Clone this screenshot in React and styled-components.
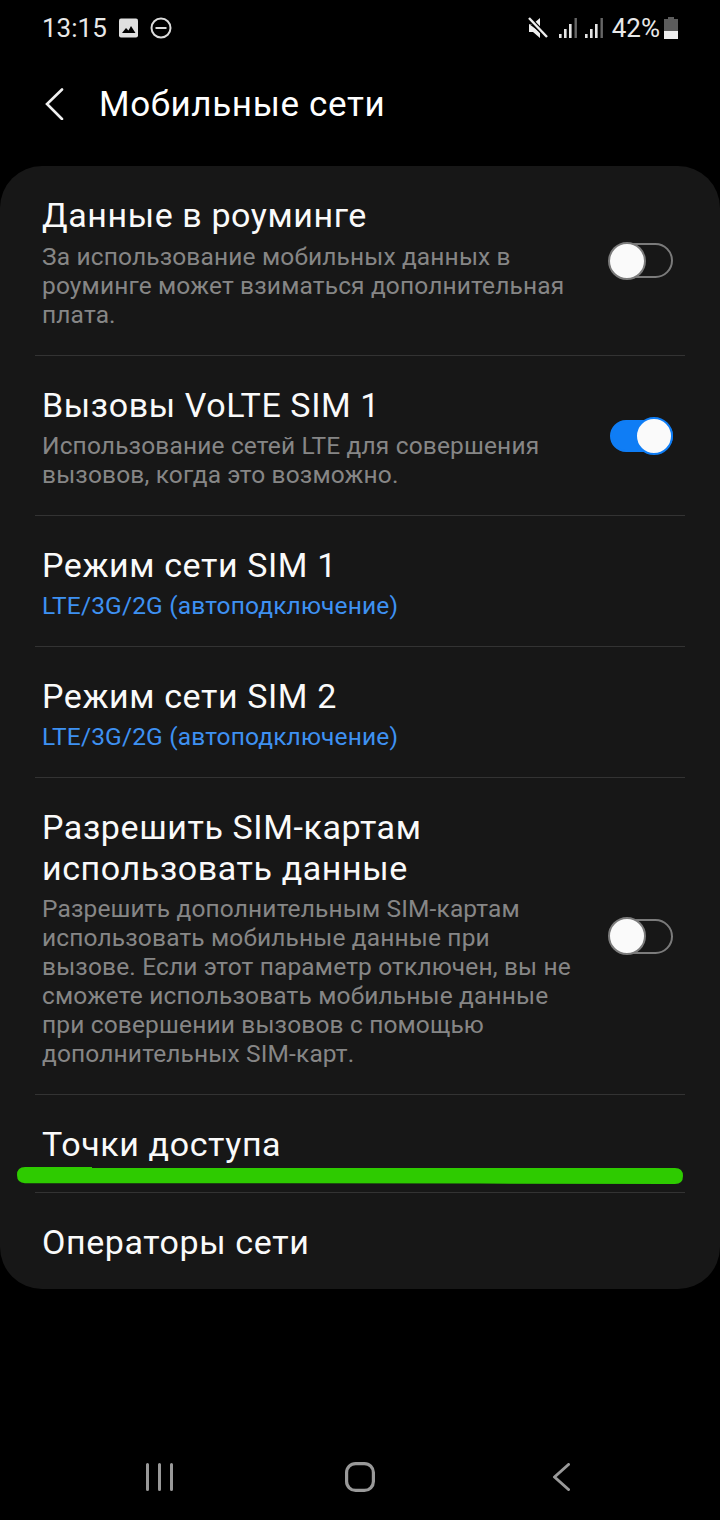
import React from 'react';
import styled, { createGlobalStyle } from 'styled-components';

const Global = createGlobalStyle`
  html, body { margin: 0; padding: 0; background: #000; }
  body { font-family: Roboto, "Noto Sans", sans-serif; }
`;

const Screen = styled.div`
  width: 720px;
  height: 1520px;
  background: #000;
  display: flex;
  flex-direction: column;
  overflow: hidden;
`;

const StatusBar = styled.div`
  height: 56px;
  padding: 0 42px 0 42px;
  display: flex;
  align-items: center;
  justify-content: space-between;
  color: #e8e8e8;
  font-size: 26px;
`;

const StatusGroup = styled.div`
  display: flex;
  align-items: center;
  gap: ${(p) => p.$gap || 0}px;
`;

const Muted = styled.svg`
  margin-right: 11px;
`;

const Signal = styled.svg`
  margin-right: ${(p) => p.$after}px;
`;

const Battery = styled.svg`
  margin-left: 4px;
`;

const Header = styled.div`
  height: 110px;
  padding: 0 0 14px 45px;
  box-sizing: border-box;
  display: flex;
  align-items: center;
  gap: 35px;
  color: #fff;
  font-size: 35px;
  letter-spacing: 0.64px;
`;

const Card = styled.div`
  position: relative;
  background: #171717;
  border-radius: 42px;
  padding: 0 35px;
  height: 1123px;
  box-sizing: border-box;
`;

const Row = styled.div`
  box-sizing: border-box;
  height: ${(p) => p.$h}px;
  padding: 0 12px 0 7px;
  display: flex;
  align-items: center;
  justify-content: space-between;
  border-bottom: ${(p) => (p.$last ? 'none' : '1px solid #333')};
`;

const RowText = styled.div`
  width: 535px;
  align-self: flex-start;
  padding-top: 29px;
`;

const Title = styled.div`
  color: #fafafa;
  font-size: 34px;
  letter-spacing: 0.6px;
  line-height: 41px;
`;

const Desc = styled.div`
  color: #868686;
  font-size: 24.5px;
  letter-spacing: 0.15px;
  line-height: 29px;
  margin-top: ${(p) => p.$gap ?? 5}px;
`;

const Value = styled(Desc)`
  color: #3e91f2;
`;

const Track = styled.div`
  flex: none;
  position: relative;
  width: 63px;
  height: ${(p) => (p.$on ? 32 : 35)}px;
  box-sizing: border-box;
  border-radius: 18px;
  background: ${(p) => (p.$on ? '#0f7df5' : 'transparent')};
  border: 2px solid ${(p) => (p.$on ? '#0f7df5' : '#7b7b7b')};
`;

const Knob = styled.div`
  position: absolute;
  top: 50%;
  transform: translateY(-50%);
  ${(p) => (p.$on ? 'right: -2px;' : 'left: -4px;')}
  width: 38px;
  height: 38px;
  box-sizing: border-box;
  border-radius: 50%;
  background: #fafafa;
  border: 2px solid ${(p) => (p.$on ? '#0f7df5' : '#7b7b7b')};
`;

const Underline = styled.svg`
  position: absolute;
  left: 17px;
  top: 1000px;
`;

const NavBar = styled.div`
  margin-top: auto;
  height: 86px;
  box-sizing: border-box;
  padding: 0 150px 0 146px;
  display: flex;
  align-items: center;
  justify-content: space-between;
`;

const Toggle = ({ on }) => (
  <Track $on={on}>
    <Knob $on={on} />
  </Track>
);

const SignalBars = ({ after }) => (
  <Signal $after={after} width="18" height="21" viewBox="0 0 18 21" fill="#e4e4e4">
    <rect x="0" y="16" width="2.6" height="4" />
    <rect x="5" y="11" width="2.6" height="9" />
    <rect x="10" y="6" width="2.6" height="14" />
    <rect x="15.5" y="0" width="2.4" height="20" fill="#666" />
  </Signal>
);

export default function App() {
  return (
    <Screen>
      <Global />
      <StatusBar>
        <StatusGroup $gap={12}>
          <span>13:15</span>
          <svg width="19" height="20" viewBox="0 0 19 20">
            <rect x="0" y="0.5" width="19" height="19" rx="2" fill="#e0e0e0" />
            <path d="M3 15l4-5 2.5 2.5L12 8l4.5 7z" fill="#000" />
          </svg>
          <svg width="22" height="22" viewBox="0 0 22 22" fill="none" stroke="#dcdcdc" strokeWidth="2">
            <circle cx="11" cy="11" r="9.5" />
            <path d="M5.5 11h11" />
          </svg>
        </StatusGroup>
        <StatusGroup>
          <Muted width="20" height="22" viewBox="0 0 20 22">
            <path d="M1 7h4l7-6v9zM1 7v8h4l7 6v-6z" fill="#eee" />
            <path d="M1 1.5L19 20" stroke="#000" strokeWidth="5" />
            <path d="M1 1L19 20" stroke="#eee" strokeWidth="2.4" />
          </Muted>
          <SignalBars after={8} />
          <SignalBars after={9} />
          <span>42%</span>
          <Battery width="14" height="22" viewBox="0 0 14 22">
            <path d="M4 0h6v2h4v20H0V2h4z" fill="#5c5c5c" />
            <rect x="0" y="14" width="14" height="8" fill="#eee" />
          </Battery>
        </StatusGroup>
      </StatusBar>

      <Header>
        <svg width="19" height="32" viewBox="0 0 19 32" fill="none" stroke="#f0f0f0" strokeWidth="2.6" strokeLinecap="round">
          <path d="M17 1.5L2 16l15 15" />
        </svg>
        <span>Мобильные сети</span>
      </Header>

      <Card>
        <Row $h={190}>
          <RowText>
            <Title>Данные в роуминге</Title>
            <Desc $gap={6}>
              За использование мобильных данных в роуминге может взиматься дополнительная плата.
            </Desc>
          </RowText>
          <Toggle />
        </Row>
        <Row $h={160}>
          <RowText>
            <Title>Вызовы VoLTE SIM 1</Title>
            <Desc>Использование сетей LTE для совершения вызовов, когда это возможно.</Desc>
          </RowText>
          <Toggle on />
        </Row>
        <Row $h={131}>
          <RowText>
            <Title>Режим сети SIM 1</Title>
            <Value>LTE/3G/2G (автоподключение)</Value>
          </RowText>
        </Row>
        <Row $h={131}>
          <RowText>
            <Title>Режим сети SIM 2</Title>
            <Value>LTE/3G/2G (автоподключение)</Value>
          </RowText>
        </Row>
        <Row $h={317}>
          <RowText>
            <Title>Разрешить SIM-картам использовать данные</Title>
            <Desc>
              Разрешить дополнительным SIM-картам использовать мобильные данные при вызове. Если этот
              параметр отключен, вы не сможете использовать мобильные данные при совершении вызовов с
              помощью дополнительных SIM-карт.
            </Desc>
          </RowText>
          <Toggle />
        </Row>
        <Row $h={98}>
          <RowText>
            <Title>Точки доступа</Title>
          </RowText>
        </Row>
        <Row $h={96} $last>
          <RowText>
            <Title>Операторы сети</Title>
          </RowText>
        </Row>
        {/* hand-drawn marker stroke under the access points row */}
        <Underline width="666" height="20" viewBox="0 0 666 20">
          <path
            d="M8 1H75V2H658Q666 2 666 10Q666 18 658 18L463 17.6L268 17.2H8Q0 17 0 9Q0 1 8 1Z"
            fill="#2ecb00"
          />
        </Underline>
      </Card>

      <NavBar>
        <svg width="27" height="28" viewBox="0 0 27 28" stroke="#999" strokeWidth="3" strokeLinecap="round">
          <path d="M1.5 1.5v25M13.5 1.5v25M25.5 1.5v25" />
        </svg>
        <svg width="30" height="30" viewBox="0 0 30 30" fill="none" stroke="#999" strokeWidth="3.2">
          <rect x="1.6" y="1.6" width="26.8" height="26.8" rx="9" />
        </svg>
        <svg width="23" height="28" viewBox="0 0 23 28" fill="none" stroke="#999" strokeWidth="3" strokeLinecap="round" strokeLinejoin="round">
          <path d="M21.5 1.5L7.5 14l14 12.5" />
        </svg>
      </NavBar>
    </Screen>
  );
}
